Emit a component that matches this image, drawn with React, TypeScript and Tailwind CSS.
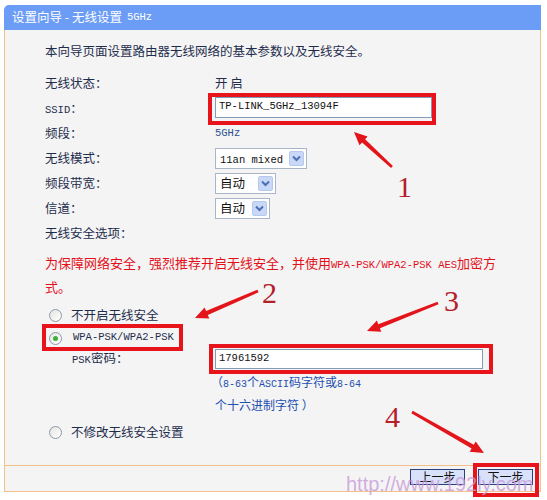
import React from "react";

const mono = "font-['Liberation_Mono','Noto_Sans_CJK_SC',monospace]";

const arrows = [
  { x1: 392, y1: 167, x2: 354, y2: 132 },
  { x1: 258, y1: 291, x2: 195, y2: 318 },
  { x1: 438, y1: 303, x2: 367, y2: 331 },
  { x1: 412, y1: 412, x2: 484, y2: 453 },
];

function arrowPoints(a: { x1: number; y1: number; x2: number; y2: number }) {
  const dx = a.x2 - a.x1;
  const dy = a.y2 - a.y1;
  const len = Math.sqrt(dx * dx + dy * dy);
  const ux = dx / len;
  const uy = dy / len;
  const px = -uy;
  const py = ux;
  const bx = a.x2 - ux * 13;
  const by = a.y2 - uy * 13;
  const shaft = [
    [a.x1 + px * 1.4, a.y1 + py * 1.4],
    [bx + px * 2.2, by + py * 2.2],
    [bx + px * 6, by + py * 6],
    [a.x2, a.y2],
    [bx - px * 6, by - py * 6],
    [bx - px * 2.2, by - py * 2.2],
    [a.x1 - px * 1.4, a.y1 - py * 1.4],
  ];
  return shaft.map((p) => p[0].toFixed(1) + "," + p[1].toFixed(1)).join(" ");
}

function Select({ label, width }: { label: React.ReactNode; width: string }) {
  return (
    <div className={`flex items-center justify-between h-[21px] bg-white border border-[#a9b6c8] pl-[4px] pr-[2px] ${width}`}>
      <span className="leading-none">{label}</span>
      <span className="w-[15px] h-[15px] rounded-[2px] bg-[#c9d8f6] border border-[#b6c8ee] flex items-center justify-center">
        <svg width="9" height="7" viewBox="0 0 9 7">
          <path d="M1 1.5 L4.5 5 L8 1.5" fill="none" stroke="#4d6fb5" strokeWidth="2" />
        </svg>
      </span>
    </div>
  );
}

function Radio({ checked }: { checked?: boolean }) {
  return (
    <span className="w-[13px] h-[13px] rounded-full border border-[#8d9aa8] bg-gradient-to-br from-[#e4e4e0] to-white flex items-center justify-center">
      {checked && <span className="w-[5px] h-[5px] rounded-full bg-[#3fae3a]" />}
    </span>
  );
}

function Row({ label, children }: { label: React.ReactNode; children?: React.ReactNode }) {
  return (
    <div className="h-[25px] flex items-center">
      <div className="w-[170px]">{label}</div>
      <div className="flex items-center">{children}</div>
    </div>
  );
}

export default function App() {
  return (
    <div className="relative w-[547px] h-[500px] bg-white overflow-hidden font-['Noto_Sans_CJK_SC',sans-serif] text-[12.5px] text-[#1f2d4d]">
      <div className="ml-[4px] pt-[5px] w-[537px]">
        <div className="h-[25px] bg-[#6b9cf6] rounded-tl-[5px] flex items-center pl-[8px] text-white">
          设置向导 - 无线设置 <span className={`${mono} text-[10.5px] ml-[5px]`}>5GHz</span>
        </div>
        <div className="bg-[#f4f4f4] border-x border-b border-[#f3c08b]">
          <div className="h-[435px] pl-[40px] pt-[11px]">
            <div className="h-[20px] flex items-center">本向导页面设置路由器无线网络的基本参数以及无线安全。</div>
            <div className="mt-[10px]">
              <Row label="无线状态：">开&nbsp;启</Row>
              <Row label={<span><span className={`${mono} text-[10.5px]`}>SSID</span>：</span>}>
                <div className="-ml-[7px] border-[4px] border-[#e8141c] pl-[3px] pb-[3px]">
                  <div className={`w-[217px] h-[21px] bg-white border border-[#7f9db9] flex items-center pl-[3px] ${mono} text-[10.5px] text-[#111]`}>
                    TP-LINK_5GHz_13094F
                  </div>
                </div>
              </Row>
              <Row label="频段：">
                <span className={`${mono} text-[10.5px] text-[#2e4f91]`}>5GHz</span>
              </Row>
              <Row label="无线模式：">
                <Select width="w-[92px]" label={<span className={`${mono} text-[10.5px] text-[#111]`}>11an mixed</span>} />
              </Row>
              <Row label="频段带宽：">
                <Select width="w-[61px]" label={<span className="text-[#111]">自动</span>} />
              </Row>
              <Row label="信道：">
                <Select width="w-[55px]" label={<span className="text-[#111]">自动</span>} />
              </Row>
              <Row label="无线安全选项：" />
            </div>
            <div className="mt-[6px] leading-[21px] text-[13px] text-[#e3101a]">
              为保障网络安全，强烈推荐开启无线安全，并使用<span className={`${mono} text-[10.5px]`}>WPA-PSK/WPA2-PSK AES</span>加密方
              <br />
              式。
            </div>
            <div className="mt-[6px] h-[25px] flex items-center pl-[4px] gap-[9px]">
              <Radio />
              <span>不开启无线安全</span>
            </div>
            <div className="h-[25px]">
              <div className="-ml-[3px] -mt-[4px] w-[141px] h-[27px] border-[4px] border-[#e8141c] flex items-center pt-[1px] pl-[3px] gap-[11px]">
                <Radio checked />
                <span className={`${mono} text-[10.5px]`}>WPA-PSK/WPA2-PSK</span>
              </div>
            </div>
            <div className="h-[20px] flex items-center">
              <div className="w-[170px] pl-[27px]">
                <span className={`${mono} text-[10.5px]`}>PSK</span>密码：
              </div>
              <div className="-ml-[6px] border-[4px] border-[#e8141c] pl-[2px] pr-[6px] py-[1px]">
                <div className={`w-[268px] h-[20px] bg-white border border-[#7f9db9] flex items-center pl-[3px] ${mono} text-[10.5px] text-[#111]`}>
                  17961592
                </div>
              </div>
            </div>
            <div className="mt-[3px] pl-[170px] leading-[20px] text-[12px] text-[#1d4fb0]">
              <span className="-ml-[4px]">（</span><span className={`${mono} text-[10px]`}>8-63</span>个<span className={`${mono} text-[10px]`}>ASCII</span>码字符或<span className={`${mono} text-[10px]`}>8-64</span>
              <br />
              个十六进制字符 ）
            </div>
            <div className="mt-[5px] h-[25px] flex items-center pl-[4px] gap-[9px]">
              <Radio />
              <span>不修改无线安全设置</span>
            </div>
          </div>
          <div className="border-t border-[#f3c08b] h-[26px] flex items-start justify-end pr-[1px]">
            <button className="mt-[3px] w-[55px] h-[16px] bg-[#d9e1fa] border border-[#2b3f78] text-[12px] leading-none text-[#111] flex items-center justify-center">
              上一步
            </button>
            <div className="ml-[8px] -mt-[3px] border-[4px] border-[#e8141c] pl-[1px] pr-[2px] pt-[2px] pb-[8px]">
              <button className="w-[55px] h-[16px] bg-[#d9e1fa] border border-[#2b3f78] text-[12px] leading-none text-[#111] flex items-center justify-center">
                下一步
              </button>
            </div>
          </div>
        </div>
      </div>

      <svg className="absolute left-0 top-0 pointer-events-none" width="547" height="500">
        {arrows.map((a, i) => (
          <polygon key={i} points={arrowPoints(a)} fill="#e3151b" />
        ))}
      </svg>
      <span className="absolute left-[397px] top-[172px] font-['Liberation_Serif',serif] text-[30px] leading-none text-[#b3202a]">1</span>
      <span className="absolute left-[262px] top-[278px] font-['Liberation_Serif',serif] text-[30px] leading-none text-[#b3202a]">2</span>
      <span className="absolute left-[444px] top-[286px] font-['Liberation_Serif',serif] text-[30px] leading-none text-[#b3202a]">3</span>
      <span className="absolute left-[385px] top-[402px] font-['Liberation_Serif',serif] text-[30px] leading-none text-[#b3202a]">4</span>
      <span className="absolute left-[346px] top-[474px] font-['Liberation_Sans',sans-serif] text-[20px] leading-none text-[#c79ad8]/80">
        http://www.192ly.com
      </span>
    </div>
  );
}
